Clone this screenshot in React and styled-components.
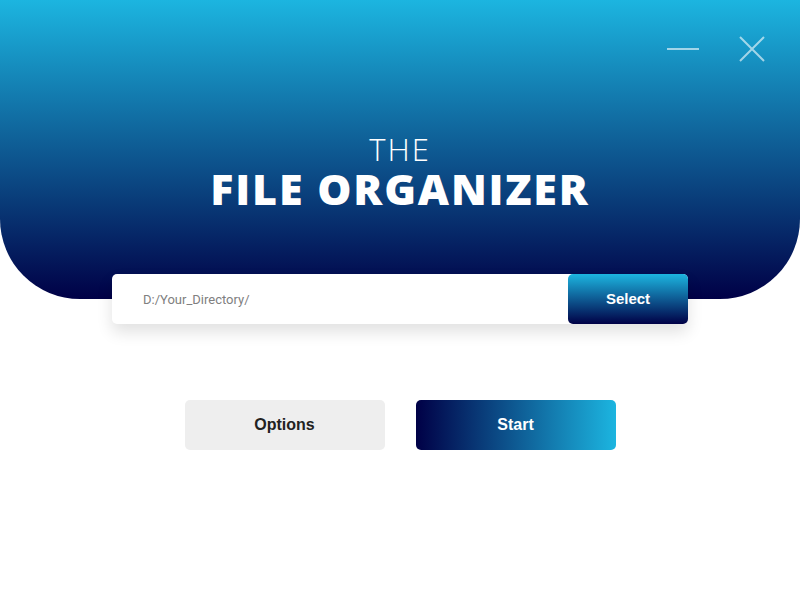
import React from "react";
import styled, { createGlobalStyle } from "styled-components";

const GlobalStyle = createGlobalStyle`
  body {
    margin: 0;
    background: #ffffff;
    font-family: "Liberation Sans", Arial, sans-serif;
  }
`;

const App = () => {
  return (
    <Page>
      <GlobalStyle />
      <Header>
        <Controls>
          <Minimize />
          <Close viewBox="0 0 26 26">
            <path d="M1 1 L25 25 M25 1 L1 25" />
          </Close>
        </Controls>
        <Title>
          <Small>THE</Small>
          <Big>FILE ORGANIZER</Big>
        </Title>
      </Header>
      <PathBar>
        <PathInput placeholder="D:/Your_Directory/" />
        <SelectButton>Select</SelectButton>
      </PathBar>
      <Actions>
        <ActionButton>Options</ActionButton>
        <ActionButton primary>Start</ActionButton>
      </Actions>
    </Page>
  );
};

export default App;

const Page = styled.div`
  width: 800px;
  height: 600px;
  overflow: hidden;
  background: #fff;
`;

const Header = styled.div`
  height: 299px;
  box-sizing: border-box;
  background: linear-gradient(to bottom, #1cb5e0, #000046);
  border-radius: 0 0 80px 80px;
  display: flex;
  flex-direction: column;
  align-items: center;
`;

const Controls = styled.div`
  align-self: flex-end;
  display: flex;
  align-items: center;
  gap: 40px;
  padding: 36px 35px 0 0;
  height: 25px;
`;

const Minimize = styled.div`
  width: 32px;
  height: 2px;
  background: rgba(255, 255, 255, 0.6);
`;

const Close = styled.svg`
  width: 26px;
  height: 26px;
  stroke: rgba(255, 255, 255, 0.6);
  stroke-width: 2;
  fill: none;
`;

const Title = styled.div`
  margin-top: 72px;
  display: flex;
  flex-direction: column;
  align-items: center;
  color: #fff;
  font-family: "Open Sans", "DejaVu Sans", sans-serif;
`;

const Small = styled.div`
  font-size: 31px;
  line-height: 32px;
  font-weight: 300;
  letter-spacing: 2px;
`;

const Big = styled.div`
  margin-top: 2px;
  font-size: 43px;
  line-height: 44px;
  font-weight: 800;
  letter-spacing: 1.8px;
`;

const PathBar = styled.div`
  width: 576px;
  height: 50px;
  margin: -25px auto 0;
  display: flex;
  background: #fff;
  border-radius: 5px;
  box-shadow: 0 8px 16px rgba(0, 0, 0, 0.12);
`;

const PathInput = styled.input`
  flex: 1;
  min-width: 0;
  border: none;
  outline: none;
  background: transparent;
  padding: 0 0 0 31px;
  font-family: Roboto, "Liberation Sans", sans-serif;
  font-size: 13px;
  color: #555;
  &::placeholder {
    color: #808080;
  }
`;

const SelectButton = styled.button`
  width: 120px;
  padding: 0 0 2px;
  border: none;
  border-radius: 5px;
  background: linear-gradient(to bottom, #1cb5e0, #000046);
  color: #fff;
  font-family: "Liberation Sans", Arial, sans-serif;
  font-size: 15px;
  font-weight: 700;
  cursor: pointer;
`;

const Actions = styled.div`
  display: flex;
  justify-content: center;
  gap: 31px;
  margin-top: 76px;
`;

const ActionButton = styled.button`
  width: 200px;
  height: 50px;
  border: none;
  border-radius: 5px;
  background: ${({ primary }) =>
    primary ? "linear-gradient(to right, #000046, #1cb5e0)" : "#eeeeee"};
  color: ${({ primary }) => (primary ? "#fff" : "#222")};
  font-family: "Liberation Sans", Arial, sans-serif;
  font-size: 16px;
  font-weight: 700;
  cursor: pointer;
`;
